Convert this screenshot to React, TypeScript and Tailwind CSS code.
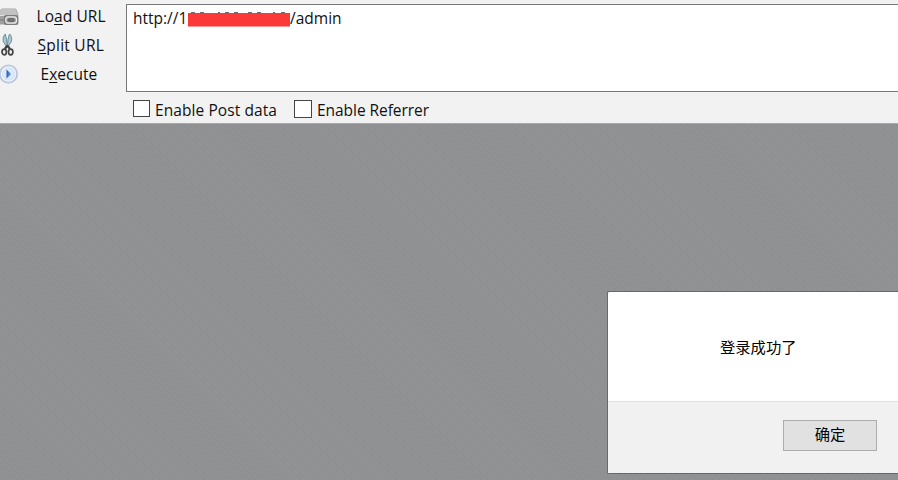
import type { ReactNode } from "react";

function DriveIcon() {
  return (
    <svg width="20" height="20" viewBox="0 0 20 20" className="block">
      <path d="M0 4 2 2.500H14.500q1.500 0 2 1.200L18.300 8v9q0 1.500-1.500 1.500H0Z" fill="#a0a0a0" />
      <path d="M0 9V4.500L2 3H14.500q1 0 1.400 1l1.900 5Z" fill="#c2c2c2" />
      <path d="M0 9.500h5" stroke="#e2e2e2" />
      <path d="M0 14h5" stroke="#777" />
      <rect x="3.800" y="9" width="14.500" height="10" rx="2.500" fill="#7d7d7d" />
      <rect x="5.700" y="10.900" width="10.800" height="6.300" rx="2.500" fill="#a0a0a0" stroke="#ededed" strokeWidth="1.200" />
      <rect x="8" y="12.700" width="6.200" height="2.700" rx="1.300" fill="#777" stroke="#555" strokeWidth=".8" />
    </svg>
  );
}

function ScissorsIcon() {
  return (
    <svg width="16" height="24" viewBox="0 0 16 24" className="block">
      <path d="M6.700 15 3.200 9.500Q2.200 4.500 5.200 2q1.800 4 2 13Z" fill="#a9c9d2" stroke="#668894" strokeWidth=".9" />
      <path d="m7.800 15 3.600-5.500Q12.500 4.500 9.500 2q-1.900 4-2.200 13Z" fill="#a9c9d2" stroke="#668894" strokeWidth=".9" />
      <path d="m7.300 13.500-2.500 3.500m2.500-3.500 2.700 3.500" stroke="#414141" strokeWidth="2.200" />
      <ellipse cx="4.200" cy="20" rx="2.200" ry="2.800" fill="#eee" stroke="#444" strokeWidth="1.700" />
      <ellipse cx="10.700" cy="20" rx="2.200" ry="2.800" fill="#eee" stroke="#444" strokeWidth="1.700" />
    </svg>
  );
}

function PlayIcon() {
  return (
    <svg width="19" height="20" viewBox="0 0 19 20" className="block">
      <defs>
        <linearGradient id="arrow" x2="1">
          <stop stopColor="#205bac" />
          <stop offset="1" stopColor="#70aaf0" />
        </linearGradient>
      </defs>
      <circle cx="8.500" cy="10" r="8.600" fill="#fafcff" stroke="#bac5da" strokeWidth="1.800" />
      <circle cx="8.500" cy="10" r="6.300" fill="#dce9fa" stroke="#d0dff5" />
      <path d="m6.500 5.500 4.700 4.500-4.700 4.500Z" fill="url(#arrow)" />
    </svg>
  );
}

function Key({ children }: { children: ReactNode }) {
  return <span className="underline decoration-1 underline-offset-2">{children}</span>;
}

function RedactedHost() {
  return (
    <svg width="102" height="15" viewBox="0 0 102 15" className="mt-[3px] block shrink-0">
      <path d="M0 1h102v13.500H0Z" fill="#fb3939" />
      <path d="M3 .600h4m5 0h4m14 0h2m5 0h4m5 0h4m10 0h4m5 0h4m12 0h2m6 0h4m5 0h4" stroke="#333" strokeWidth=".8" />
    </svg>
  );
}

export default function App() {
  return (
    <div className="flex h-[480px] w-[898px] flex-col overflow-hidden bg-[#909192] font-['Open_Sans','Noto_Sans_CJK_SC',sans-serif] text-[15.500px] leading-5 text-[#111]">
      <header className="flex h-[124px] shrink-0 border-b border-[#a8a8a8] bg-[#f2f2f2]">
        <nav className="flex w-[126px] shrink-0 flex-col pt-[2px]">
          <button className="flex h-[29px] items-start">
            <span className="w-[36.500px] pt-[4px]"><DriveIcon /></span>
            <span className="whitespace-nowrap pt-[4px] tracking-[0.080px]">Lo<Key>a</Key>d URL</span>
          </button>
          <button className="flex h-[30px] items-start">
            <span className="w-[37.500px] pt-[1px]"><ScissorsIcon /></span>
            <span className="whitespace-nowrap pt-[4px] tracking-[0.250px]"><Key>S</Key>plit URL</span>
          </button>
          <button className="flex h-[29px] items-start">
            <span className="w-[40.500px] pt-[3px]"><PlayIcon /></span>
            <span className="whitespace-nowrap pt-[3px]">E<Key>x</Key>ecute</span>
          </button>
        </nav>
        <div className="flex grow flex-col pt-1">
          <div className="flex h-[88px] items-start border border-r-0 border-[#777] bg-white pl-[6px] pt-[4px]">
            <span className="-mt-px w-[55px] whitespace-nowrap">http://1</span>
            <RedactedHost />
            <span className="-mt-px">/admin</span>
          </div>
          <div className="flex items-start pl-[7px] pt-[8px]">
            <label className="flex w-[161px] items-start">
              <span className="mr-[5px] size-[17px] shrink-0 border border-[#444] bg-white" />
              <span className="whitespace-nowrap tracking-[0.080px]">Enable Post data</span>
            </label>
            <label className="flex items-start">
              <span className="mr-[5px] size-[18px] shrink-0 border border-[#444] bg-white" />
              <span className="whitespace-nowrap tracking-[-0.050px]">Enable Referrer</span>
            </label>
          </div>
        </div>
      </header>
      <main className="flex grow items-start justify-end bg-[repeating-linear-gradient(45deg,#8f9091_0px,#8f9091_2px,#919293_2px,#919293_4px)] pt-[167px]">
        <section className="flex h-[183px] w-[291px] flex-col rounded-l-[2px] border border-r-0 border-[#68696a] bg-white">
          <div className="h-[109px] pl-[112px] pt-[45px] text-[15.300px] text-black">登录成功了</div>
          <div className="flex grow items-start justify-end border-t border-[#dedede] bg-[#f1f1f1] pr-[21px] pt-[18px]">
            <button className="h-[31px] w-[94px] border border-[#adadad] bg-[#e1e1e1] pb-[3px] text-[15.300px] leading-[24px] text-black">确定</button>
          </div>
        </section>
      </main>
    </div>
  );
}
